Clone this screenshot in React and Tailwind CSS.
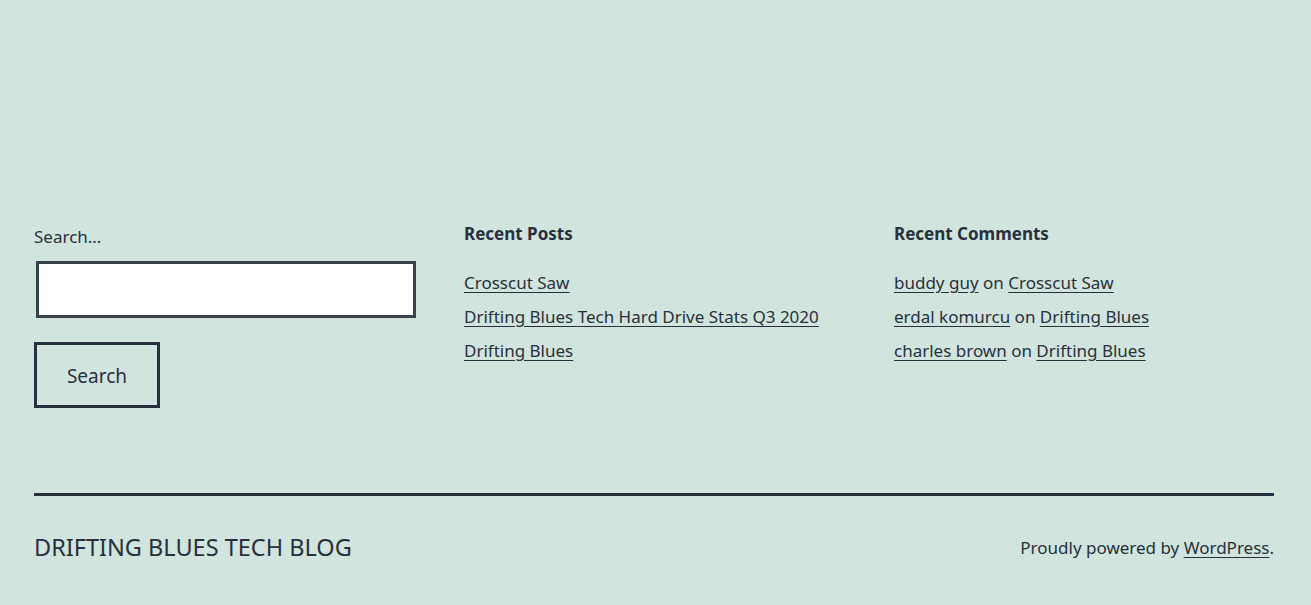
export default function App() {
    return (
        <div className="min-h-[605px] w-full bg-[#d1e4dd] text-[#28303d] font-['Noto_Sans',sans-serif]">
            <div className="px-[34px] pt-[222px]">
                <div className="grid grid-cols-[380px_380px_380px] gap-x-[50px]">
                    <div className="flex flex-col">
                        <label className="pt-[2px] text-[17px] leading-[26px]">Search…</label>
                        <input className="mt-[11px] ml-[2px] h-[57px] w-[380px] border-[3px] border-[#39414d] bg-white" />
                        <button className="mt-[24px] h-[66px] w-[126px] border-[3px] border-[#28303d] pt-[2px] text-[19px]">Search</button>
                    </div>
                    <div>
                        <h2 className="text-[17px] font-bold leading-[24px]">Recent Posts</h2>
                        <ul className="mt-[24px] flex flex-col gap-y-[8px] text-[17px] leading-[26px]">
                            <li><a className="underline underline-offset-[3px]" href="#">Crosscut Saw</a></li>
                            <li><a className="underline underline-offset-[3px]" href="#">Drifting Blues Tech Hard Drive Stats Q3 2020</a></li>
                            <li><a className="underline underline-offset-[3px]" href="#">Drifting Blues</a></li>
                        </ul>
                    </div>
                    <div>
                        <h2 className="text-[17px] font-bold leading-[24px]">Recent Comments</h2>
                        <ul className="mt-[24px] flex flex-col gap-y-[8px] text-[17px] leading-[26px]">
                            <li><a className="underline underline-offset-[3px]" href="#">buddy guy</a> on <a className="underline underline-offset-[3px]" href="#">Crosscut Saw</a></li>
                            <li><a className="underline underline-offset-[3px]" href="#">erdal komurcu</a> on <a className="underline underline-offset-[3px]" href="#">Drifting Blues</a></li>
                            <li><a className="underline underline-offset-[3px]" href="#">charles brown</a> on <a className="underline underline-offset-[3px]" href="#">Drifting Blues</a></li>
                        </ul>
                    </div>
                </div>
                <div className="mt-[85px] h-[3px] w-[1240px] bg-[#28303d]" />
                <div className="flex w-[1240px] items-center justify-between pt-[34px]">
                    <span className="text-[23.5px]">DRIFTING BLUES TECH BLOG</span>
                    <span className="text-[17px]">Proudly powered by <a className="underline underline-offset-[3px]" href="#">WordPress</a>.</span>
                </div>
            </div>
        </div>
    );
}
